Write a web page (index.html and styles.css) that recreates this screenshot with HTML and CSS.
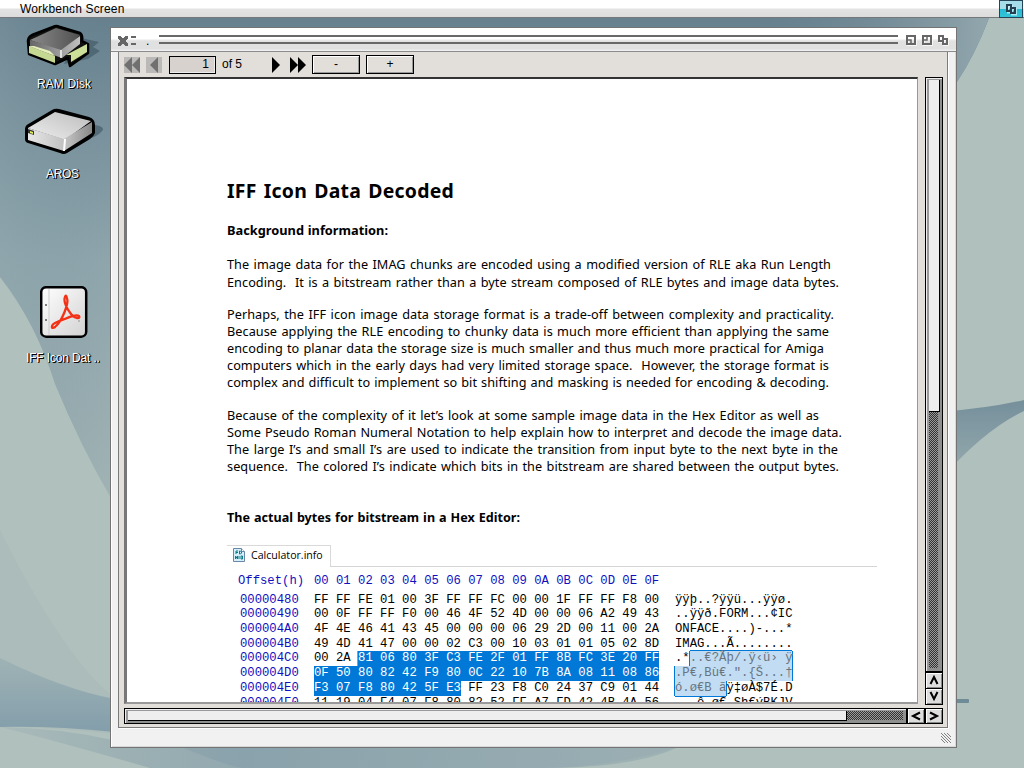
FILE: index.html
```html
<!DOCTYPE html>
<html lang="en">
<head>
<meta charset="utf-8">
<title>Workbench Screen</title>
<link rel="stylesheet" href="styles.css">
</head>
<body>
<svg class="wallpaper" viewBox="0 0 1024 768" aria-hidden="true">
  <defs>
    <linearGradient id="sky" x1="0" y1="0" x2="0" y2="1"><stop offset="0" stop-color="#66808e"/><stop offset=".5" stop-color="#8fa6ad"/><stop offset="1" stop-color="#a2b4b5"/></linearGradient>
    <linearGradient id="skyTop" gradientUnits="userSpaceOnUse" x1="0" y1="0" x2="1000" y2="0"><stop offset="0" stop-color="#8ea5ac" stop-opacity=".3"/><stop offset=".12" stop-color="#66808e" stop-opacity="0"/><stop offset=".75" stop-color="#6c8592" stop-opacity="0"/><stop offset="1" stop-color="#96aab0"/></linearGradient>
    <linearGradient id="wing" x1="0" y1="0" x2="0" y2="1"><stop offset="0" stop-color="#758f9b"/><stop offset="1" stop-color="#99adb0"/></linearGradient>
    <linearGradient id="low" x1="0" y1="0" x2="0" y2="1"><stop offset="0" stop-color="#9fb3b5"/><stop offset="1" stop-color="#839eab"/></linearGradient>
    <linearGradient id="floor" x1="0" y1="0" x2="1" y2="0"><stop offset="0" stop-color="#a9bab9"/><stop offset=".35" stop-color="#91a8af"/><stop offset="1" stop-color="#adbdbb"/></linearGradient>
  </defs>
  <rect width="1024" height="768" fill="#b0c0bc"/>
  <path d="M0 18H989Q975 55 957 82V500H112Q80 445 55 384Q36 323 0 277Z" fill="url(#sky)"/>
  <path d="M0 18H989Q975 55 957 82H112V500Q80 445 55 384Q36 323 0 277Z" fill="url(#skyTop)"/>
  <path d="M950 82H989V400H1024V500H950Z" fill="#b0c0bc"/>
  <path d="M940 412Q990 408 1024 400V411Q985 429 940 480Z" fill="url(#wing)"/>
  <path d="M0 530Q65 660 115 698V734Q55 728 0 726Z" fill="#a5b7b7" opacity=".4"/>
  <path d="M0 658Q65 690 115 699V732Q55 726 0 727Z" fill="url(#low)"/>
  <path d="M112 740H700Q620 768 540 768H150Q60 742 0 727Q60 728 112 740Z" fill="url(#floor)"/>
  <path d="M165 740Q230 768 245 768H540Q650 768 690 740Z" fill="#7e99a5" opacity=".35"/>
  <rect x="950" y="699" width="19" height="4" rx="1" fill="#6f8b98"/>
</svg>

<header class="menubar">
  <span class="screen-title">Workbench Screen</span>
  <span class="depth"><svg width="24" height="16" viewBox="0 0 24 16"><path d="M8 4.500h4v6h-4zM12 7.500h4v5h-4z" fill="none" stroke="#e0fbff" stroke-width="2" transform="translate(1 1)" opacity=".7"/><path d="M8 4h4v6H8zM12 7h4v5h-4z" fill="none" stroke="#263f50" stroke-width="2"/></svg></span>
</header>

<div class="desk-icon ram">
  <svg width="80" height="46" viewBox="0 0 80 46">
    <defs><linearGradient id="ramTop"><stop offset="0" stop-color="#8a8a8a"/><stop offset="1" stop-color="#505050"/></linearGradient><linearGradient id="ramSide"><stop offset="0" stop-color="#666"/><stop offset="1" stop-color="#c0c0c0"/></linearGradient></defs>
    <path d="M57 14l18 4-6 5 7 4-12 8-14 3-10 2 6-12z" fill="#405965" opacity=".65"/>
    <path d="M4 17Q4 13 8 11L29 3Q32 1 36 3L56 9Q59 11 58 17L64 20V29L46 42 44 34 31 40 5 30Z" fill="#111" stroke="#000" stroke-width="2.500" stroke-linejoin="round"/>
    <path d="M6 16L32 4 56 11Q48 20 37 27Z" fill="url(#ramTop)"/>
    <path d="M6 16L37 26 56 12V20L38 34 6 23Z" fill="url(#ramSide)"/>
    <path d="M5 22L31 32V39L5 29Z" fill="#c6d993"/><path d="M42 31L63 20V28L47 38V31Z" fill="#ccdf98"/>
    <path d="M5 22l26 10-5-5-16-5z" fill="#e4efba"/><path d="M37 26v8" stroke="#f5f5f5" stroke-width="1.500"/>
  </svg>
</div>
<div class="desk-label ram-label">RAM Disk</div>
<div class="desk-icon aros">
  <svg width="82" height="50" viewBox="0 0 82 50">
    <defs><linearGradient id="driveTop" x1="1" x2="0" y2="1"><stop offset="0" stop-color="#bdbdbd"/><stop offset="1" stop-color="#eeeeee"/></linearGradient><linearGradient id="driveSide"><stop offset="0" stop-color="#e7e7e7"/><stop offset=".65" stop-color="#bbb"/><stop offset="1" stop-color="#888"/></linearGradient></defs>
    <path d="M66 17Q84 19 79 24 74 31 57 34L40 42Z" fill="#405965" opacity=".65"/>
    <path d="M2 22Q2 18 7 16L29 3Q32 1 36 2L66 10Q72 12 72 18V26Q71 29 67 32L44 46Q41 48 37 46L5 36Q2 35 2 32Z" fill="#000"/>
    <path d="M5 21L32 5 68 14 42 33Z" fill="url(#driveTop)"/>
    <path d="M5 21L41 32 69 15V26L41 44 5 33Z" fill="url(#driveSide)"/>
    <path d="M42 32L41 44" stroke="#fff" stroke-width="2"/>
    <path d="M5 22l6 2v4l-6-2z" fill="#333" /><path d="M7 24l3 1v2l-3-1z" fill="#e4ef54"/>
  </svg>
</div>
<div class="desk-label aros-label">AROS</div>
<div class="desk-icon pdf">
  <svg width="48" height="52" viewBox="0 0 48 52">
    <defs><linearGradient id="paper" x2="1" y2="1"><stop offset="0" stop-color="#fff"/><stop offset="1" stop-color="#d2d2d2"/></linearGradient></defs>
    <rect x="1.200" y="1.200" width="45" height="49.500" rx="5" fill="url(#paper)" stroke="#000" stroke-width="2.500"/>
    <path d="M9 3V49" stroke="#ccc"/><circle cx="6" cy="19" r="1" fill="#555"/><circle cx="6" cy="34" r="1" fill="#555"/>
    <path d="M25 11C23 15 27 23 31 28C35 33 41 33 39 30C36 27 23 34 17 36C10 39 11 44 15 41C22 35 29 18 27 12Q26 8 25 11Z" fill="none" stroke="#f23116" stroke-width="2.300"/>
    <circle cx="39" cy="35" r=".8" fill="#888"/>
  </svg>
</div>
<div class="desk-label pdf-label">IFF Icon Dat ..</div>

<main class="window">
  <div class="titlebar">
    <svg class="close" width="20" height="12" viewBox="0 0 20 12"><path d="M0 0h3v1h1v1h2V1h1V0h3v3H9v1H8v2h1v1h1v3H7V9H6V8H4v1H3v1H0V7h1V6h1V4H1V3H0z" fill="#666" transform="translate(0 1)"/><path d="M13 1h5v2h-5zM13 8h5v2h-5z" fill="#666"/></svg>
    <span class="name">.</span>
    <span class="drag"></span>
    <svg class="gadgets" width="44" height="11" viewBox="0 0 44 11"><g fill="none" stroke="#fff" transform="translate(.7 .7)"><path d="M1 1h8v8H1zM17 1h8v8h-8zM33 1h4v5h-4zM37 4h4v5h-4z" stroke-width="2"/></g><g fill="none" stroke="#666" stroke-width="2"><path d="M1 1h8v8H1zM17 1h8v8h-8zM33 1h4v5h-4zM37 4h4v5h-4z"/><path d="M1 5h4v4M21 1v4h-3" stroke-width="1.500"/></g></svg>
  </div>
  <div class="client">
    <div class="toolbar">
      <svg class="first" width="16" height="16"><rect width="16" height="16" fill="#bab9b7"/><path d="M8 0v16L0 8zM16 0v16L8 8z" fill="#707070"/></svg>
      <svg class="prev" width="16" height="16"><rect width="16" height="16" fill="#bab9b7"/><path d="M12 0v16L4 8z" fill="#707070"/></svg>
      <span class="page-no">1</span><span class="page-count">of 5</span>
      <svg class="next" width="8" height="16"><path d="M0 0l8 8-8 8z"/></svg>
      <svg class="last" width="16" height="16"><path d="M0 0l8 8-8 8zM8 0l8 8-8 8z"/></svg>
      <span class="btn">-</span><span class="btn">+</span>
    </div>
    <div class="viewer">
      <article class="page">
        <h1>IFF Icon Data Decoded</h1>
        <h2 class="w160">Background information:</h2>
        <div class="para first-para">
          <div class="w604">The image data for the IMAG chunks are encoded using a modified version of RLE aka Run Length</div>
          <div class="w612">Encoding.&nbsp; It is a bitstream rather than a byte stream composed of RLE bytes and image data bytes.</div>
        </div>
        <div class="para">
          <div class="w607">Perhaps, the IFF icon image data storage format is a trade-off between complexity and practicality.</div>
          <div class="w602">Because applying the RLE encoding to chunky data is much more efficient than applying the same</div>
          <div class="w597">encoding to planar data the storage size is much smaller and thus much more practical for Amiga</div>
          <div class="w602">computers which in the early days had very limited storage space.&nbsp; However, the storage format is</div>
          <div class="w602">complex and difficult to implement so bit shifting and masking is needed for encoding &amp; decoding.</div>
        </div>
        <div class="para">
          <div class="w592">Because of the complexity of it let’s look at some sample image data in the Hex Editor as well as</div>
          <div class="w615">Some Pseudo Roman Numeral Notation to help explain how to interpret and decode the image data.</div>
          <div class="w610">The large I’s and small I’s are used to indicate the transition from input byte to the next byte in the</div>
          <div class="w612">sequence.&nbsp; The colored I’s indicate which bits in the bitstream are shared between the output bytes.</div>
        </div>
        <h2 class="w293">The actual bytes for bitstream in a Hex Editor:</h2>
        <div class="tabs"><div class="tab"><svg width="12" height="14" viewBox="0 0 12 14"><path d="M.5.5h8l3 3v10H.5z" fill="#d8eef8" stroke="#6888a8"/><path d="M8.500.5v3h3" fill="#fff" stroke="#6888a8"/><path d="M3 6V3h2M3 4.500h2M6.500 3v3h1l1-1V4l-1-1zM2.500 8v3M4.500 8v3M2.500 8l2 3M6 8v3M8 8h1.500v3H8z" fill="none" stroke="#087b88"/></svg><span>Calculator.info</span></div></div>
        <div class="hex">
          <div class="row head"><span class="off">Offset(h)</span><span class="bytes">00 01 02 03 04 05 06 07 08 09 0A 0B 0C 0D 0E 0F</span></div>
          <div class="row"><span class="off">00000480</span><span class="bytes">FF FF FE 01 00 3F FF FF FC 00 00 1F FF FF F8 00</span><span class="chars">ÿÿþ..?ÿÿü...ÿÿø.</span></div>
          <div class="row"><span class="off">00000490</span><span class="bytes">00 0F FF FF F0 00 46 4F 52 4D 00 00 06 A2 49 43</span><span class="chars">..ÿÿð.FORM...¢IC</span></div>
          <div class="row"><span class="off">000004A0</span><span class="bytes">4F 4E 46 41 43 45 00 00 00 06 29 2D 00 11 00 2A</span><span class="chars">ONFACE....)-...*</span></div>
          <div class="row"><span class="off">000004B0</span><span class="bytes">49 4D 41 47 00 00 02 C3 00 10 03 01 01 05 02 8D</span><span class="chars">IMAG...Ã........</span></div>
          <div class="row"><span class="off">000004C0</span><span class="bytes">00 2A <b class="sel caret">81 06 80 3F C3 FE 2F 01 FF 8B FC 3E 20 FF</b></span><span class="chars">.*<b class="echo top">..€?Ãþ/.ÿ‹ü› ÿ</b></span></div>
          <div class="row"><span class="off">000004D0</span><span class="bytes"><b class="sel">0F 50 80 82 42 F9 80 0C 22 10 7B 8A 08 11 08 86</b></span><span class="chars"><b class="echo mid">.P€‚Bù€.".{Š...†</b></span></div>
          <div class="row"><span class="off">000004E0</span><span class="bytes"><b class="sel">F3 07 F8 80 42 5F E3</b> FF 23 F8 C0 24 37 C9 01 44</span><span class="chars"><b class="echo end">ó.ø€B ã</b>ÿ‡øÀ$7É.D</span></div>
          <div class="row"><span class="off">000004F0</span><span class="bytes">11 19 04 F4 07 F8 80 82 52 FF A7 FD 42 4B 4A 56</span><span class="chars">...ô.ø€.Sh€ýBKJV</span></div>
        </div>
      </article>
      <div class="vscroll"><div class="track"><div class="thumb"></div></div><div class="arrow"><svg width="14" height="14"><path d="M3.500 11L7 4l3.500 7" /></svg></div><div class="arrow"><svg width="14" height="14"><path d="M3.500 3L7 10l3.500-7"/></svg></div></div>
    </div>
    <div class="hscroll"><div class="track"><div class="thumb"></div></div><div class="arrow"><svg width="16" height="14"><path d="M12 3.500L5 7l7 3.500"/></svg></div><div class="arrow"><svg width="16" height="14"><path d="M4 3.500L11 7l-7 3.500"/></svg></div></div>
  </div>
  <div class="statusbar"><svg width="10" height="10"><path d="M0 0l10 10M3 0l7 7M6 0l4 4M0 3l7 7M0 6l4 4" stroke="#666" stroke-width=".8"/></svg></div>
</main>
</body>
</html>
```
FILE: styles.css
```css
* { box-sizing: border-box; }
body { margin: 0; width: 1024px; height: 768px; overflow: hidden; position: relative; font: 12px "Liberation Sans", Arial, sans-serif; color: #000; }
svg { display: block; flex: none; }
.wallpaper { position: absolute; inset: 0; width: 1024px; height: 768px; }
.menubar { position: relative; height: 18px; display: flex; justify-content: space-between; background: linear-gradient(#fff 0 48%, #e3e3e3 52%, #dcdcdc); border-bottom: 1px solid #74787a; }
.screen-title { padding-left: 20px; line-height: 18px; letter-spacing: .17px; }
.depth { width: 24px; height: 18px; margin-right: 1px; background: linear-gradient(#a6dce9 0 48%, #25bbd2 52%, #35c3d8); border: 1px solid #264455; }
.depth svg { margin-left: -1px; }
.desk-icon { position: absolute; }
.ram { left: 24px; top: 24px; }
.aros { left: 23px; top: 107px; }
.pdf { left: 40px; top: 286px; }
.desk-label { position: absolute; color: #fff; text-shadow: 1px 1px 0 #000, 1px 0 0 #000; line-height: 14px; white-space: pre; }
.ram-label { left: 37px; top: 77px; letter-spacing: .1px; }
.aros-label { left: 46px; top: 167px; letter-spacing: -.3px; }
.pdf-label { left: 26px; top: 351px; letter-spacing: -.15px; }

.window { position: absolute; left: 110px; top: 27px; width: 847px; height: 721px; display: flex; flex-direction: column; border: 1px solid #747474; background: #f1f1f1; box-shadow: inset 1px 1px #fff, inset -1px -1px #d8d8d8; }
.titlebar { flex: none; height: 24px; display: flex; align-items: flex-start; padding: 7px 8px 0 7px; border-bottom: 1px solid #8c8c8c; background: linear-gradient(#fff 0 46%, #e1e1e1 56%, #e0e0e0 90%, #f3f3f3); }
.name { flex: none; width: 21px; padding-left: 8px; line-height: 13px; }
.drag { flex: none; width: 739px; height: 9px; margin-right: 8px; border: solid #686868; border-width: 2px 0; }
.close { height: 12px; }
.gadgets { overflow: visible; }
.client { width: 830px; height: 676px; margin-left: 7px; padding: 3px 4px 0 5px; display: flex; flex-direction: column; background: #e2dfda; border: solid #7b7b7b; border-width: 0 1px 1px; box-shadow: 1px 1px #fff; }
.toolbar { flex: none; height: 22px; display: flex; align-items: flex-start; }
.first, .prev { margin-top: 2px; }
.prev { margin-left: 6px; }
.page-no { width: 47px; height: 18px; margin: 1px 0 0 7px; padding-right: 6px; text-align: right; line-height: 15px; background: #d7d2ce; border: 1px solid #000; box-shadow: inset -1px -1px #eee; }
.page-count { width: 50px; padding-left: 6px; line-height: 18px; }
.next, .last { margin-top: 2px; }
.next { margin-left: 6px; }
.last { margin: 2px 6px 0 10px; }
.btn { width: 48px; height: 19px; margin-right: 6px; text-align: center; line-height: 17px; border: 1px solid #000; box-shadow: inset 1px 1px #fff, inset -1px -1px #999; }
.viewer { flex: none; height: 627px; display: flex; gap: 7px; }
.page { width: 794px; height: 627px; overflow: hidden; background: #fff; border: solid; border-width: 2px 1px 2px 3px; border-color: #333 #999 #999 #777; padding: 96px 0 0 100px; font-family: "Noto Sans", sans-serif; }
.page h1 { margin: 0; font-size: 19.400px; line-height: 32px; height: 32px; width: 227px; letter-spacing: .25px; white-space: nowrap; text-align-last: justify; }
.page h2 { margin: 0; font-size: 12.800px; line-height: 18px; white-space: nowrap; text-align-last: justify; }
.page h1 + h2 { margin-top: 14px; }
.para { font-size: 12.7px; line-height: 17px; margin-bottom: 16px; letter-spacing: .05px; }
.para > div { white-space: nowrap; text-align-last: justify; }
.para.first-para { margin-top: 17px; line-height: 17.5px; margin-bottom: 15px; }
.page .para + .w293 { margin-top: 34px; font-size: 12.600px; }
.w160 { width: 161px; } .w293 { width: 293px; } .w592 { width: 592px; } .w597 { width: 597px; } .w602 { width: 602px; } .w604 { width: 604px; } .w607 { width: 607px; } .w610 { width: 611px; } .w612 { width: 612px; } .w615 { width: 615px; }
.tabs { width: 650px; height: 22px; margin-top: 18px; display: flex; }
.tabs::after { content: ""; flex: 1; border-bottom: 1px solid #d4d4d4; }
.tab { width: 104px; height: 22px; padding: 2px 0 0 6px; display: flex; gap: 6px; border: solid #d9d9d9; border-width: 1px 1px 0 0; font: 10.600px/15px "Open Sans", sans-serif; }
.hex { padding: 7px 0 0 11px; font: 12.24px/14.7px "Liberation Mono", monospace; }
.row { display: flex; height: 14.7px; white-space: pre; }
.row.head { color: #1010c0; margin-bottom: 4px; }
.off { width: 76px; padding-left: 2px; color: #1010c0; }
.head .off { padding-left: 0; }
.bytes { width: 361px; }
.sel, .echo { display: inline-block; font-weight: normal; height: 14.7px; }
.sel { background: #0078d7; color: #fff; }
.caret { box-shadow: -1px 0 #ef8632; }
.echo { background: #c1dcf3; color: #687480; box-shadow: 1px 0 #0078d7, -1px 0 #0078d7; }
.echo.top { box-shadow: 1px 0 #0078d7, -1px 0 #0078d7, 0 -1px #0078d7; }
.echo.end { box-shadow: 1px 0 #0078d7, -1px 0 #0078d7, 0 1px #0078d7; }
.track { border: 1px solid #000; background: repeating-conic-gradient(#333 0 25%, #999 0 50%) 0 0 / 2px 2px; }
.vscroll { width: 18px; height: 628px; display: flex; flex-direction: column; }
.vscroll .track { height: 596px; box-shadow: inset 1px 1px #eee, inset 3px 2px #999, inset -4px -3px #8f8f8f; }
.vscroll .thumb { width: 11px; height: 332px; margin: 2px 0 0 3px; background: #eee; border: solid #000; border-width: 0 1px 1px 0; }
.arrow { border: 1px solid #000; background: #ddd; box-shadow: inset 1px 1px #fff, inset -1px -1px #888; }
.arrow path { fill: none; stroke: #000; stroke-width: 2; }
.vscroll .arrow { height: 17px; padding-left: 1px; margin-top: -1px; }
.vscroll .arrow:nth-child(2) { margin-top: 0; }
.hscroll { flex: none; width: 819px; height: 16px; margin-top: 4px; display: flex; }
.hscroll .track { width: 783px; box-shadow: inset 1px 1px #eee, inset 3px 2px #999, inset -3px -3px #8f8f8f; }
.hscroll .thumb { width: 719px; height: 10px; margin: 2px 0 0 3px; background: #eee; border: solid #000; border-width: 0 1px 1px 0; }
.hscroll .arrow { width: 18px; }
.statusbar { flex: 1; display: flex; align-items: flex-start; justify-content: flex-end; padding: 5px 5px 0 0; }
```
